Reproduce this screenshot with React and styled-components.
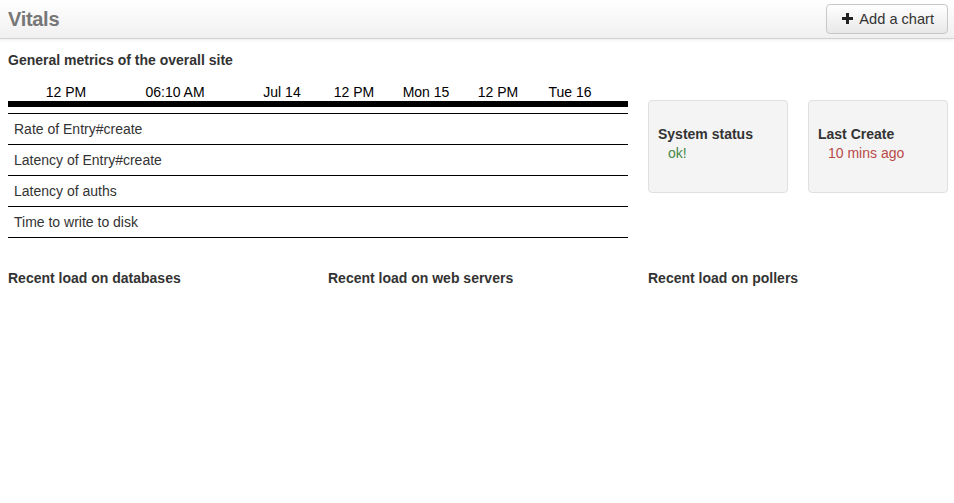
import React from 'react';
import styled, { createGlobalStyle } from 'styled-components';

const GlobalStyle = createGlobalStyle`
  body {
    margin: 0;
    background: #fff;
    font-family: "Liberation Sans", Arial, Helvetica, sans-serif;
    color: #333;
  }
`;

const Header = styled.header`
  height: 38px;
  display: flex;
  align-items: center;
  justify-content: space-between;
  padding: 0 6px 0 8px;
  background: linear-gradient(to bottom, #ffffff, #f0f0f0);
  border-bottom: 1px solid #d2d2d2;
  box-shadow: 0 1px 3px rgba(0, 0, 0, 0.08);
`;

const Title = styled.h1`
  margin: 0;
  font-size: 20px;
  font-weight: bold;
  color: #777;
  letter-spacing: -0.3px;
`;

const Button = styled.button`
  display: flex;
  align-items: center;
  gap: 6px;
  height: 30px;
  padding: 0 13px 0 15px;
  margin-top: -1px;
  font-family: inherit;
  font-size: 14.6px;
  color: #333;
  background: linear-gradient(to bottom, #ffffff, #e8e8e8);
  border: 1px solid #c8c8c8;
  border-radius: 4px;
  box-shadow: inset 0 1px 0 rgba(255, 255, 255, 0.4);
`;

const Main = styled.main`
  padding: 12px 8px 0 8px;
  width: 940px;
`;

const SectionTitle = styled.h3`
  margin: 0;
  font-size: 14px;
  font-weight: bold;
  color: #333;
  line-height: 18px;
`;

const TopRow = styled.div`
  display: flex;
  gap: 20px;
`;

const MetricsCol = styled.div`
  width: 620px;
`;

const Axis = styled.div`
  position: relative;
  height: 21px;
  margin-top: 11px;
  border-bottom: 6px solid #000;
`;

const Tick = styled.span`
  position: absolute;
  top: 4px;
  font-size: 14px;
  color: #000;
  transform: translateX(-50%);
  white-space: nowrap;
`;

const Metrics = styled.div`
  margin-top: 6px;
  border-top: 1px solid #000;
`;

const MetricRow = styled.div`
  height: 30px;
  display: flex;
  align-items: center;
  padding-left: 6px;
  font-size: 14px;
  color: #333;
  border-bottom: 1px solid #000;
`;

const Cards = styled.div`
  display: flex;
  gap: 20px;
  padding-top: 31px;
`;

const Card = styled.div`
  width: 138px;
  height: 91px;
  background: #f4f4f4;
  border: 1px solid #e0e0e0;
  border-radius: 4px;
`;

const CardInner = styled.div`
  padding: 25px 9px 0 9px;
`;

const CardTitle = styled.div`
  font-size: 14px;
  font-weight: bold;
  color: #333;
  line-height: 17px;
`;

const CardValue = styled.div`
  font-size: 14px;
  line-height: 20px;
  padding-left: 10px;
  color: ${(p) => (p.$tone === 'ok' ? '#468847' : '#b94a48')};
`;

const BottomRow = styled.div`
  display: flex;
  gap: 20px;
  margin-top: 31px;
`;

const Column = styled.div`
  width: 300px;
`;

const ticks = [
  ['12 PM', 58],
  ['06:10 AM', 167],
  ['Jul 14', 274],
  ['12 PM', 346],
  ['Mon 15', 418],
  ['12 PM', 490],
  ['Tue 16', 562],
];

const metrics = [
  'Rate of Entry#create',
  'Latency of Entry#create',
  'Latency of auths',
  'Time to write to disk',
];

const Plus = () => (
  <svg width="11" height="11" viewBox="0 0 11 11">
    <path d="M4 0h3v4h4v3H7v4H4V7H0V4h4z" fill="#222" />
  </svg>
);

export default function App() {
  return (
    <>
      <GlobalStyle />
      <Header>
        <Title>Vitals</Title>
        <Button>
          <Plus />
          Add a chart
        </Button>
      </Header>
      <Main>
        <SectionTitle>General metrics of the overall site</SectionTitle>
        <TopRow>
          <MetricsCol>
            <Axis>
              {ticks.map(([label, x], i) => (
                <Tick key={i} style={{ left: x }}>
                  {label}
                </Tick>
              ))}
            </Axis>
            <Metrics>
              {metrics.map((m) => (
                <MetricRow key={m}>{m}</MetricRow>
              ))}
            </Metrics>
          </MetricsCol>
          <Cards>
            <Card>
              <CardInner>
                <CardTitle>System status</CardTitle>
                <CardValue $tone="ok">ok!</CardValue>
              </CardInner>
            </Card>
            <Card>
              <CardInner>
                <CardTitle>Last Create</CardTitle>
                <CardValue $tone="warn">10 mins ago</CardValue>
              </CardInner>
            </Card>
          </Cards>
        </TopRow>
        <BottomRow>
          <Column>
            <SectionTitle>Recent load on databases</SectionTitle>
          </Column>
          <Column>
            <SectionTitle>Recent load on web servers</SectionTitle>
          </Column>
          <Column>
            <SectionTitle>Recent load on pollers</SectionTitle>
          </Column>
        </BottomRow>
      </Main>
    </>
  );
}
